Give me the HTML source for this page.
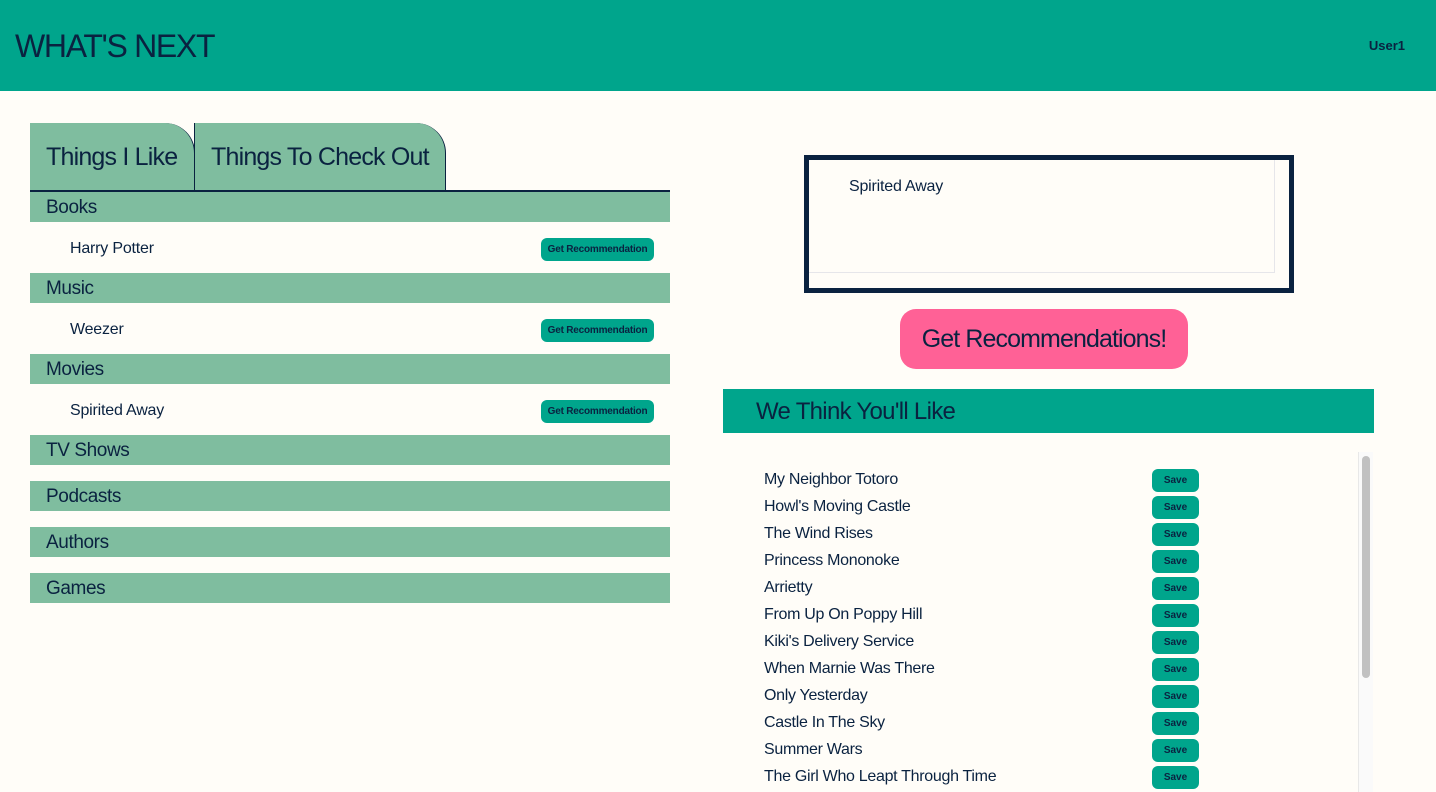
<!DOCTYPE html>
<html><head><style>
*{margin:0;padding:0;box-sizing:border-box}
body{width:1436px;height:792px;overflow:hidden;background:#FFFDF8;font-family:"Liberation Sans",sans-serif;color:#0A2240;position:relative}
.hdr{position:absolute;left:0;top:0;width:1436px;height:91px;background:#00A58C}
.hdr h1{position:absolute;left:15px;top:28px;font-size:32px;font-weight:normal;letter-spacing:-1.3px}
.hdr .u{position:absolute;right:31px;top:38px;font-size:13px;font-weight:bold}
.tab{position:absolute;top:123px;height:68px;background:#7FBD9F;border:1px solid #0A2240;border-bottom:none;border-top:none;border-top-right-radius:30px;font-size:25px;padding:20px 0 0 16px;letter-spacing:-0.8px}
.line{position:absolute;left:30px;top:190px;width:640px;height:2px;background:#0A2240}
.sec{position:absolute;left:30px;width:640px;height:30px;background:#7FBD9F;font-size:19px;padding:5px 16px;letter-spacing:-0.4px}
.it{position:absolute;left:70px;font-size:16px;letter-spacing:-0.2px}
.gr{position:absolute;left:541px;width:113px;height:23px;background:#00A58C;border-radius:6px;font-size:10px;font-weight:bold;text-align:center;line-height:23px;letter-spacing:-0.2px}
.box{position:absolute;left:804px;top:155px;width:490px;height:138px;border:5px solid #0A2240}
.box .in{position:absolute;left:0;top:0;width:466px;height:113px;border-right:1px solid #e6e6ea;border-bottom:1px solid #e6e6ea}
.box .t{position:absolute;left:40px;top:18px;font-size:16px;letter-spacing:-0.2px}
.btn{position:absolute;left:900px;top:309px;width:288px;height:60px;background:#FF6196;border-radius:16px;font-size:25px;text-align:center;line-height:60px;letter-spacing:-0.9px}
.ban{position:absolute;left:723px;top:389px;width:651px;height:44px;background:#00A58C;font-size:24px;padding:9px 0 0 33px;letter-spacing:-0.7px}
.r{position:absolute;left:764px;font-size:16px;letter-spacing:-0.3px}
.s{position:absolute;left:1152px;width:47px;height:23px;background:#00A58C;border-radius:6px;font-size:10px;font-weight:bold;text-align:center;line-height:23px}
.sb{position:absolute;left:1358px;top:452px;width:15px;height:340px;border-left:1px solid #e8e8e8;background:#fafafa}
.th{position:absolute;left:1362px;top:456px;width:8px;height:222px;background:#c1c1c1;border-radius:4px}
</style></head><body>
<div class="hdr"><h1>WHAT'S NEXT</h1><div class="u">User1</div></div>
<div class="tab" style="left:30px;width:165px;border-left:none">Things I Like</div>
<div class="tab" style="left:194px;width:252px">Things To Check Out</div>
<div class="line"></div>
<div class="sec" style="top:192px">Books</div>
<div class="it" style="top:240px">Harry Potter</div><div class="gr" style="top:238px">Get Recommendation</div>
<div class="sec" style="top:273px">Music</div>
<div class="it" style="top:321px">Weezer</div><div class="gr" style="top:319px">Get Recommendation</div>
<div class="sec" style="top:354px">Movies</div>
<div class="it" style="top:402px">Spirited Away</div><div class="gr" style="top:400px">Get Recommendation</div>
<div class="sec" style="top:435px">TV Shows</div>
<div class="sec" style="top:481px">Podcasts</div>
<div class="sec" style="top:527px">Authors</div>
<div class="sec" style="top:573px">Games</div>
<div class="box"><div class="in"></div><div class="t">Spirited Away</div></div>
<div class="btn">Get Recommendations!</div>
<div class="ban">We Think You'll Like</div>
<div class="r" style="top:471px">My Neighbor Totoro</div><div class="s" style="top:469px">Save</div>
<div class="r" style="top:498px">Howl's Moving Castle</div><div class="s" style="top:496px">Save</div>
<div class="r" style="top:525px">The Wind Rises</div><div class="s" style="top:523px">Save</div>
<div class="r" style="top:552px">Princess Mononoke</div><div class="s" style="top:550px">Save</div>
<div class="r" style="top:579px">Arrietty</div><div class="s" style="top:577px">Save</div>
<div class="r" style="top:606px">From Up On Poppy Hill</div><div class="s" style="top:604px">Save</div>
<div class="r" style="top:633px">Kiki's Delivery Service</div><div class="s" style="top:631px">Save</div>
<div class="r" style="top:660px">When Marnie Was There</div><div class="s" style="top:658px">Save</div>
<div class="r" style="top:687px">Only Yesterday</div><div class="s" style="top:685px">Save</div>
<div class="r" style="top:714px">Castle In The Sky</div><div class="s" style="top:712px">Save</div>
<div class="r" style="top:741px">Summer Wars</div><div class="s" style="top:739px">Save</div>
<div class="r" style="top:768px">The Girl Who Leapt Through Time</div><div class="s" style="top:766px">Save</div>
<div class="sb"></div><div class="th"></div>
</body></html>
